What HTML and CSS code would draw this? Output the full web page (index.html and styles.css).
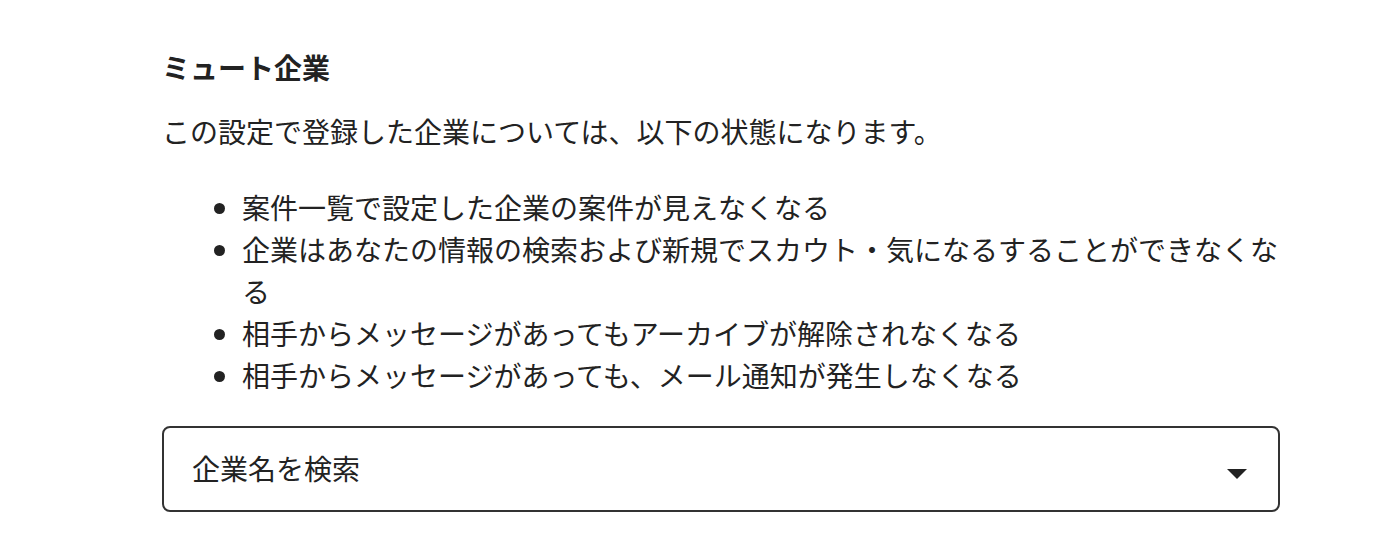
FILE: index.html
```html
<!DOCTYPE html>
<html lang="ja">
<head>
<meta charset="utf-8">
<link rel="stylesheet" href="styles.css">
</head>
<body>
<main class="section">
  <h2 class="title">ミュート企業</h2>
  <p class="desc">この設定で登録した企業については、以下の状態になります。</p>
  <ul class="list">
    <li>案件一覧で設定した企業の案件が見えなくなる</li>
    <li>企業はあなたの情報の検索および新規でスカウト・気になるすることができなくなる</li>
    <li>相手からメッセージがあってもアーカイブが解除されなくなる</li>
    <li>相手からメッセージがあっても、メール通知が発生しなくなる</li>
  </ul>
  <div class="select">
    <span class="placeholder">企業名を検索</span>
    <svg class="arrow" width="20" height="10" viewBox="0 0 20 10"><path d="M0 0 H20 L10 10 Z" fill="#222"/></svg>
  </div>
</main>
</body>
</html>
```
FILE: styles.css
```css
html, body {
  margin: 0;
  padding: 0;
  background: #fff;
}
body {
  font-family: "Noto Sans CJK JP", "Noto Sans", sans-serif;
  color: #222;
  font-size: 28px;
  line-height: 42px;
}
.section {
  width: 1118px;
  padding: 46px 0 0 162px;
}
.title {
  margin: 0;
  font-size: 28px;
  line-height: 42px;
  font-weight: 700;
}
.desc {
  margin: 22px 0 0;
}
.list {
  margin: 34px 0 0;
  padding-left: 80px;
}
.select {
  margin-top: 30px;
  box-sizing: border-box;
  height: 86px;
  border: 2px solid #333;
  border-radius: 8px;
  display: flex;
  align-items: center;
  justify-content: space-between;
  padding: 0 31px 0 28px;
}
.placeholder {
  color: #222;
  margin-top: -2px;
}
.arrow {
  display: block;
  margin-top: 10px;
}
```
